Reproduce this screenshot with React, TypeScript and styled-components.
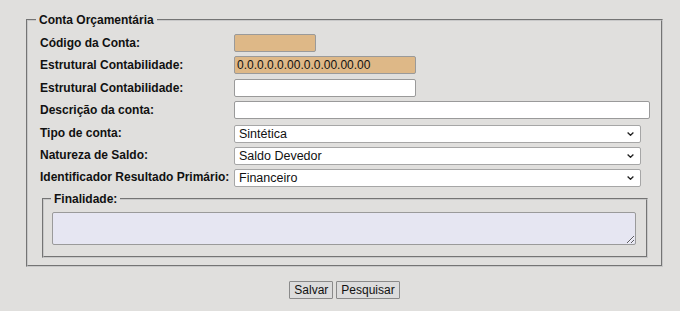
import styled, { createGlobalStyle } from "styled-components";

const GlobalStyle = createGlobalStyle`
  html, body {
    margin: 0;
    padding: 0;
    background: #e0dfdd;
    font-family: "Liberation Sans", Arial, sans-serif;
  }
`;

const Page = styled.div`
  width: 637px;
  margin-left: 26px;
  padding-top: 13px;
`;

const Group = styled.fieldset<{ $inner?: boolean }>`
  margin: ${(p) => (p.$inner ? "6px 1px 0 2px" : "0")};
  padding: ${(p) => (p.$inner ? "1px 10px 11px 8px" : "7px 12px 7px 12px")};
  border: 2px groove #c8c8c8;
  min-width: 0;
`;

const Legend = styled.legend<{ $shift: number }>`
  padding: 0 3px;
  margin-left: ${(p) => p.$shift}px;
  font-size: 12px;
  font-weight: bold;
  color: #111;
`;

const Grid = styled.div`
  display: grid;
  grid-template-columns: 194px 1fr;
  row-gap: 4.4px;
  align-items: center;
`;

const Label = styled.label`
  font-size: 12px;
  font-weight: bold;
  color: #111;
  white-space: nowrap;
`;

const Field = styled.input<{ $w: number; $ro?: boolean }>`
  box-sizing: border-box;
  width: ${(p) => p.$w}px;
  height: 18px;
  margin: 0;
  padding: 0 2px;
  border: 1px solid #9a9a9a;
  border-radius: 2px;
  background: ${(p) => (p.$ro ? "#deb887" : "#fff")};
  font-family: "Liberation Sans", Arial, sans-serif;
  font-size: 12px;
  color: #111;
  outline: none;
`;

const SelectBox = styled.div`
  position: relative;
  width: 407px;
  height: 18px;
`;

const Select = styled.select`
  appearance: none;
  box-sizing: border-box;
  width: 100%;
  height: 18px;
  margin: 0;
  padding: 0 0 0 4px;
  border: 1px solid #a6a6a6;
  border-radius: 2px;
  background: #fff;
  font-family: "Liberation Sans", Arial, sans-serif;
  font-size: 12.5px;
  color: #111;
  outline: none;
`;

const Chevron = styled.svg`
  position: absolute;
  right: 7px;
  top: 8px;
  width: 7px;
  height: 4px;
  pointer-events: none;
`;

const Area = styled.textarea`
  display: block;
  box-sizing: border-box;
  width: 100%;
  height: 33px;
  margin: 5px 0 0;
  border: 1px solid #9a9a9a;
  border-radius: 2px;
  background: #e6e6f2;
  font-family: "Liberation Sans", Arial, sans-serif;
  font-size: 12px;
`;

const Actions = styled.div`
  display: flex;
  justify-content: center;
  gap: 3px;
  margin-top: 14px;
`;

const Button = styled.button`
  box-sizing: border-box;
  height: 18px;
  padding: 0 4px;
  border: 1px solid #8a8a8a;
  border-radius: 1px;
  background: #dcdcdc;
  font-family: "Liberation Sans", Arial, sans-serif;
  font-size: 12px;
  color: #111;
  line-height: 16px;
`;

function Dropdown({ value, options }: { value: string; options: string[] }) {
  return (
    <SelectBox>
      <Select defaultValue={value}>
        {options.map((o) => (
          <option key={o} value={o}>{o}</option>
        ))}
      </Select>
      <Chevron viewBox="0 0 7 4">
        <path d="M0.6 0.6 L3.5 3.3 L6.4 0.6" fill="none" stroke="#222" strokeWidth="1.3" />
      </Chevron>
    </SelectBox>
  );
}

export default function App() {
  return (
    <>
      <GlobalStyle />
      <Page>
        <Group>
          <Legend $shift={-4}>Conta Orçamentária</Legend>
          <Grid>
            <Label>Código da Conta:</Label>
            <Field $w={82} $ro readOnly />
            <Label>Estrutural Contabilidade:</Label>
            <Field $w={182} $ro readOnly defaultValue="0.0.0.0.0.00.0.0.00.00.00" />
            <Label>Estrutural Contabilidade:</Label>
            <Field $w={182} />
            <Label>Descrição da conta:</Label>
            <Field $w={416} />
            <Label>Tipo de conta:</Label>
            <Dropdown value="Sintética" options={["Sintética", "Analítica"]} />
            <Label>Natureza de Saldo:</Label>
            <Dropdown value="Saldo Devedor" options={["Saldo Devedor", "Saldo Credor"]} />
            <Label>Identificador Resultado Primário:</Label>
            <Dropdown value="Financeiro" options={["Financeiro", "Não Financeiro"]} />
          </Grid>
          <Group $inner>
            <Legend $shift={-1}>Finalidade:</Legend>
            <Area />
          </Group>
        </Group>
        <Actions>
          <Button>Salvar</Button>
          <Button>Pesquisar</Button>
        </Actions>
      </Page>
    </>
  );
}
